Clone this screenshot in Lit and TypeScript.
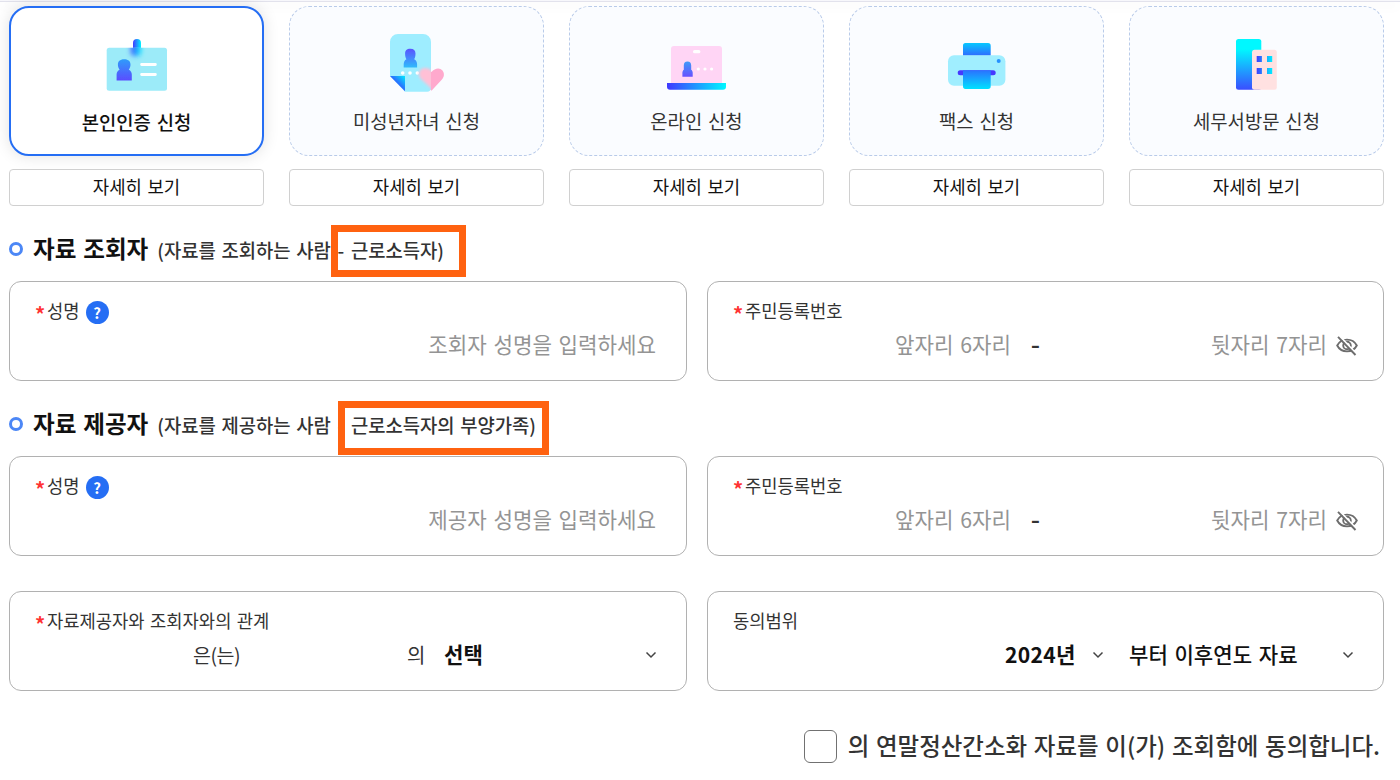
import { LitElement, html, svg, css, nothing, TemplateResult } from 'lit';
import { customElement, property, state } from 'lit/decorators.js';
import { classMap } from 'lit/directives/class-map.js';

interface Method {
  label: string;
  icon: TemplateResult;
}

// All icons share one coordinate space, see the viewBox in AuthCard
const idCardIcon = svg`
  <defs>
    <linearGradient id="clip"><stop stop-color="#4339ff" /><stop offset="1" stop-color="#00f4ff" /></linearGradient>
    <linearGradient id="person" x2="0" y2="1"><stop stop-color="#2f9cfb" /><stop offset="1" stop-color="#5a4cff" /></linearGradient>
    <filter id="soft" x="-50%" y="-50%" width="200%" height="200%"><feGaussianBlur stdDeviation="0.7" /></filter>
    <filter id="glow" x="-100%" y="-100%" width="300%" height="300%"><feGaussianBlur stdDeviation="2.4" /></filter>
    <clipPath id="board"><rect x="106.700" y="47.700" width="60.300" height="43" rx="2.500" /></clipPath>
  </defs>
  <rect x="133" y="39" width="8" height="16" rx="4" fill="url(#clip)" />
  <rect x="106.700" y="47.700" width="60.300" height="43" rx="2.500" fill="#9cebf9" />
  <g clip-path="url(#board)"><rect x="131" y="42" width="10" height="14" rx="4" fill="url(#clip)" filter="url(#glow)" /></g>
  <path d="M124.200 59.200c-4.500 0-6.300 2.400-6.300 5.400 0 2 .6 3.900 1.700 5.200-1.900.9-3 2.600-3 4.600v6.200h15.200v-6.200c0-2-1.100-3.700-3-4.600 1.100-1.300 1.700-3.200 1.700-5.200 0-3-1.800-5.400-6.300-5.400z" fill="url(#person)" filter="url(#soft)" />
  <path d="M141.600 64.500h13.800M141.600 74.500h13.800" stroke="#fff" stroke-width="2.800" stroke-linecap="round" />
`;

const childIcon = svg`
  <defs>
    <linearGradient id="fold" x1="0" y1="1" x2="1" y2="0"><stop offset=".45" stop-color="#315bff" /><stop offset="1" stop-color="#00eaff" /></linearGradient>
    <linearGradient id="person" x2="0" y2="1"><stop stop-color="#5a52ff" /><stop offset="1" stop-color="#2fbcfb" /></linearGradient>
    <filter id="soft" x="-50%" y="-50%" width="200%" height="200%"><feGaussianBlur stdDeviation="0.6" /></filter>
    <filter id="glow" x="-50%" y="-50%" width="200%" height="200%"><feGaussianBlur stdDeviation="1.700" /></filter>
    <clipPath id="sheet"><path d="M118 34h25a8 8 0 0 1 8 8v46a4 4 0 0 1-4 3.700h-22L110 76V42a8 8 0 0 1 8-8z" /></clipPath>
  </defs>
  <path d="M151.500 90.800l-11-11.300c-2.800-3-2.800-7 0-9.500 3-2.500 7.500-2 11 2 3.200-4 8.300-4.800 11-1.500 2.200 3 1.800 6.500-.8 9.300z" fill="#ffa9cd" />
  <path d="M118 34h25a8 8 0 0 1 8 8v46a4 4 0 0 1-4 3.700h-22L110 76V42a8 8 0 0 1 8-8z" fill="#9eedff" />
  <path d="M110 76h15v15.300z" fill="url(#fold)" />
  <path d="M130.300 48.800c-3.600 0-5.200 1.900-5.200 4.800 0 2.500.4 4.300 1.300 5.600-1.700.9-2.700 2.800-2.700 5v3.400h13.400v-3.400c0-2.200-1.100-4.100-2.900-5 .9-1.300 1.300-3.100 1.300-5.600 0-2.900-1.700-4.800-5.200-4.800z" fill="url(#person)" filter="url(#soft)" />
  <g fill="#fff"><circle cx="122.700" cy="73" r="1.800" /><circle cx="130" cy="73" r="1.800" /><circle cx="137.300" cy="73" r="1.800" /></g>
  <g clip-path="url(#sheet)"><path d="M153 90l-12-11c-2.800-3-2.800-7 0-9.500 3-2.500 7.500-2 12 2z" fill="#ffc0d6" filter="url(#glow)" /></g>
`;

const laptopIcon = svg`
  <defs>
    <linearGradient id="base"><stop stop-color="#4038ff" /><stop offset="1" stop-color="#00f8ff" /></linearGradient>
    <linearGradient id="person" x2="0" y2="1"><stop stop-color="#3f9bf8" /><stop offset="1" stop-color="#6650ff" /></linearGradient>
    <filter id="soft" x="-50%" y="-50%" width="200%" height="200%"><feGaussianBlur stdDeviation="0.6" /></filter>
  </defs>
  <path d="M114 46h45a3 3 0 0 1 3 3v34.500h-51V49a3 3 0 0 1 3-3z" fill="#ffd5f5" />
  <rect x="133" y="50" width="7.400" height="3.300" rx="1.600" fill="#fff" />
  <path d="M127.500 61.500c-2.500 0-3.700 1.600-3.700 4v4.200c-.9.700-1.400 1.900-1.400 3.300v3.800h10.300V73c0-1.400-.5-2.600-1.500-3.300v-4.200c0-2.400-1.200-4-3.700-4z" fill="url(#person)" filter="url(#soft)" />
  <g fill="#fff"><circle cx="138.300" cy="69" r="1.600" /><circle cx="145" cy="69" r="1.600" /><circle cx="151.600" cy="69" r="1.600" /></g>
  <path d="M107 83h59v4a3 3 0 0 1-3 2.800h-53a3 3 0 0 1-3-2.800z" fill="url(#base)" />
`;

const faxIcon = svg`
  <defs>
    <linearGradient id="feed" x2="0" y2="1"><stop stop-color="#06c8ff" /><stop offset="1" stop-color="#2f6bff" /></linearGradient>
    <linearGradient id="paper" x2="0" y2="1"><stop stop-color="#2a72ff" /><stop offset="1" stop-color="#00e2ff" /></linearGradient>
  </defs>
  <path d="M126 43h22a2.700 2.700 0 0 1 2.700 2.700v10H123V45.700A2.700 2.700 0 0 1 126 43z" fill="url(#feed)" />
  <rect x="108" y="55.300" width="57.400" height="30.400" rx="6" fill="#a0eeff" />
  <circle cx="158.700" cy="61" r="2" fill="#2691ff" />
  <rect x="117.700" y="70.300" width="38" height="5" rx="2.500" fill="#4638ff" />
  <path d="M123 70.300h27.700v16a2.700 2.700 0 0 1-2.700 2.700h-22a2.700 2.700 0 0 1-3-2.700z" fill="url(#paper)" />
`;

const officeIcon = svg`
  <defs>
    <linearGradient id="tower" x2="0" y2="1"><stop offset=".2" stop-color="#00f8ff" /><stop offset="1" stop-color="#3a4dff" /></linearGradient>
    <linearGradient id="panes" gradientUnits="userSpaceOnUse" x1="136" x2="152"><stop stop-color="#4038ff" /><stop offset="1" stop-color="#00eaff" /></linearGradient>
  </defs>
  <rect x="116" y="39" width="25.300" height="50.800" rx="2.500" fill="url(#tower)" />
  <rect x="132" y="49.700" width="24.800" height="40.100" rx="2.500" fill="#ffe1e1" />
  <path d="M136.700 56h5.200v6h-5.200zM147 56h5.200v6H147zM136.700 68h5.200v6h-5.200zM147 68h5.200v6H147z" fill="url(#panes)" />
`;

const chevron = html`
  <svg class="chevron" width="12" height="8" viewBox="0 0 12 8" aria-hidden="true">
    <path d="M1.500 1.500L6 6l4.500-4.500" fill="none" stroke="#444" stroke-width="1.500" />
  </svg>
`;

const eyeOff = html`
  <svg class="eye" width="22" height="22" viewBox="0 0 22 22" aria-hidden="true">
    <g fill="none" stroke="#6d6d6d" stroke-width="1.900">
      <path d="M1.200 10.500C3.300 6.500 6.800 4.600 11 4.600s7.700 1.900 9.800 5.900c-2.100 4-5.600 5.900-9.800 5.900s-7.700-1.900-9.800-5.900z" />
      <circle cx="11" cy="10.500" r="3.800" />
      <path d="M3.500.8l16.500 17.500" stroke="#fff" />
      <path d="M2 1.800l17.500 18.200" />
    </g>
  </svg>
`;

// One application method: the selectable card and its detail button
@customElement('auth-card')
export class AuthCard extends LitElement {
  @property({ type: String }) public label = '';

  @property({ attribute: false }) public icon: TemplateResult | typeof nothing = nothing;

  @property({ type: Boolean }) public selected = false;

  render() {
    return html`
      <button class=${classMap({ card: true, selected: this.selected })} aria-pressed=${this.selected}>
        <svg width="80" height="62" viewBox="97 34 80 62" aria-hidden="true">${this.icon}</svg>
        <span class="name">${this.label}</span>
      </button>
      <button class="more">자세히 보기</button>
    `;
  }

  static styles = css`
    :host {
      display: flex;
      flex-direction: column;
      gap: 13px;
    }

    button {
      box-sizing: border-box;
      margin: 0;
      padding: 0;
      font-family: inherit;
      word-spacing: 0.09em;
    }

    .card {
      display: flex;
      flex-direction: column;
      align-items: center;
      height: 150px;
      padding-top: 27px;
      border: 1px dashed #b9cbe9;
      border-radius: 20px;
      background: #fafcff;
      color: #333;
      font-size: 18.8px;
      line-height: 28px;
    }

    .name {
      margin-top: 11px;
    }

    .card.selected {
      padding-top: 26px;
      border: 2px solid #256ef4;
      background: #fff;
      color: #111;
      font-weight: 500;
      box-shadow: 0 0 16px rgba(0, 0, 0, 0.12);
    }

    .card.selected .name {
      margin-top: 12px;
      font-size: 18.8px;
    }

    .more {
      height: 37px;
      padding-bottom: 3px;
      border: 1px solid #d0d0d0;
      border-radius: 4px;
      background: #fff;
      color: #111;
      font-size: 17.8px;
      line-height: 32px;
    }
  `;
}

@customElement('app-root')
export class AppRoot extends LitElement {
  @state() private selectedIndex = 0;

  private methods: Method[] = [
    { label: '본인인증 신청', icon: idCardIcon },
    { label: '미성년자녀 신청', icon: childIcon },
    { label: '온라인 신청', icon: laptopIcon },
    { label: '팩스 신청', icon: faxIcon },
    { label: '세무서방문 신청', icon: officeIcon },
  ];

  // Name and resident number, the same pair for both people
  private _person(placeholder: string) {
    return html`
      <div class="row">
        <div class="box">
          <div class="label"><span class="req">*</span>성명<button class="help" aria-label="도움말">?</button></div>
          <div class="fields end name-fields">
            <input class="full" type="text" placeholder=${placeholder} />
          </div>
        </div>
        <div class="box">
          <div class="label"><span class="req">*</span>주민등록번호</div>
          <div class="fields end">
            <input class="front" type="text" placeholder="앞자리 6자리" />
            <span class="dash">-</span>
            <input class="back" type="text" placeholder="뒷자리 7자리" />
            ${eyeOff}
          </div>
        </div>
      </div>
    `;
  }

  render() {
    return html`
      <div class="topline"></div>
      <main>
        <div class="methods">
          ${this.methods.map(
            (method, index) => html`<auth-card
              .label=${method.label}
              .icon=${method.icon}
              .selected=${index === this.selectedIndex}
              @click=${() => {
                this.selectedIndex = index;
              }}
            ></auth-card>`,
          )}
        </div>

        <h2>
          <i class="ring"></i>
          <span>자료 조회자</span>
          <span class="sub">(자료를 조회하는 사람 <span class="hyphen">-</span> <span class="mark viewer">근로소득자)</span></span>
        </h2>
        ${this._person('조회자 성명을 입력하세요')}

        <h2>
          <i class="ring"></i>
          <span>자료 제공자</span>
          <span class="sub">(자료를 제공하는 사람 <span class="hyphen">-</span> <span class="mark provider">근로소득자의 부양가족)</span></span>
        </h2>
        ${this._person('제공자 성명을 입력하세요')}

        <div class="row last">
          <div class="box">
            <div class="label"><span class="req">*</span>자료제공자와 조회자와의 관계</div>
            <div class="fields relation">
              <span class="is">은(는)</span>
              <span class="of">의</span>
              <button class="select grow">선택 ${chevron}</button>
            </div>
          </div>
          <div class="box">
            <div class="label">동의범위</div>
            <div class="fields end">
              <button class="select year"><span>2024년</span> ${chevron}</button>
              <button class="select range">부터 이후연도 자료 ${chevron}</button>
            </div>
          </div>
        </div>

        <label class="agree">
          <input type="checkbox" />
          <span>의 연말정산간소화 자료를 이(가) 조회함에 동의합니다.</span>
        </label>
      </main>
    `;
  }

  static styles = css`
    :host {
      display: block;
      height: 780px;
      overflow: hidden;
      background: #fff;
      color: #333;
      font-family: 'Noto Sans CJK KR', sans-serif;
      word-spacing: 0.09em;
    }

    .topline {
      height: 1px;
      background: #f7f7fb;
      border-bottom: 1px solid #e2e2ec;
      box-shadow: 0 4px 12px rgba(0, 0, 0, 0.07);
    }

    main {
      display: flex;
      flex-direction: column;
      padding: 4px 16px 0 9px;
    }

    .methods {
      display: grid;
      grid-template-columns: repeat(5, 255px);
      justify-content: space-between;
    }

    h2 {
      display: flex;
      align-items: center;
      height: 75px;
      box-sizing: border-box;
      margin: 0;
      padding-top: 9px;
      color: #111;
      font-size: 23.6px;
      font-weight: 700;
      line-height: 34px;
      white-space: nowrap;
    }

    .ring {
      box-sizing: border-box;
      width: 14px;
      height: 14px;
      margin: 2px 10px 0 0;
      border: 3px solid #4c87f6;
      border-radius: 50%;
    }

    .sub {
      margin: 3px 0 0 9px;
      color: #333;
      font-size: 18.8px;
      font-weight: 500;
      line-height: 28px;
    }

    .hyphen {
      margin: 0 1px 0 1px;
    }

    .mark {
      position: relative;
    }

    /* Highlight frame laid over the heading text */
    .mark::after {
      content: '';
      position: absolute;
      box-sizing: border-box;
      border: 7px solid #ff6210;
    }

    .viewer::after {
      left: -20px;
      top: -11px;
      width: 135px;
      height: 52px;
    }

    .provider::after {
      left: -13px;
      top: -10px;
      width: 211px;
      height: 54px;
    }

    .row {
      display: grid;
      grid-template-columns: 678px 677px;
      gap: 20px;
    }

    .row.last {
      margin-top: 35px;
    }

    .box {
      box-sizing: border-box;
      height: 100px;
      padding: 13px 25px 0 25px;
      border: 1px solid #b1b1b1;
      border-radius: 12px;
    }

    .label {
      display: flex;
      align-items: center;
      height: 30px;
      font-size: 17.7px;
      line-height: 26px;
    }

    .req {
      width: 12px;
      height: 14px;
      color: #f33;
      font-size: 20px;
      font-weight: 700;
      line-height: 21px;
    }

    .help {
      width: 23px;
      height: 23px;
      margin: 5px 0 0 6px;
      padding: 0;
      border: 0;
      border-radius: 50%;
      background: #256ef4;
      color: #fff;
      font: 700 15px/22px 'Noto Sans CJK KR', sans-serif;
    }

    .fields {
      display: flex;
      align-items: center;
      height: 38px;
      font-size: 20px;
    }

    .end {
      justify-content: flex-end;
    }

    .name-fields {
      padding-right: 5px;
    }

    input[type='text'] {
      min-width: 0;
      padding: 0;
      border: 0;
      outline: 0;
      background: none;
      font: 400 21.2px/30px 'Noto Sans CJK KR', sans-serif;
      word-spacing: 0.09em;
      text-align: right;
    }

    input::placeholder {
      color: #949494;
    }

    .full {
      width: 400px;
    }

    .front {
      width: 180px;
    }

    .dash {
      width: 49px;
      margin-top: -4px;
      text-align: center;
      font-size: 26px;
      font-weight: 500;
    }

    .back {
      width: 267px;
    }

    .eye {
      margin: 3px 0 0 9px;
    }

    .select {
      display: flex;
      align-items: center;
      justify-content: space-between;
      padding: 0;
      border: 0;
      background: none;
      color: #111;
      font: 700 21.1px/30px 'Noto Sans CJK KR', sans-serif;
      word-spacing: 0.09em;
    }

    .chevron {
      margin-top: 2px;
    }

    .relation {
      padding: 0 4px 0 158px;
    }

    .is {
      width: 214px;
      font-size: 19.5px;
      letter-spacing: -0.5px;
    }

    .of {
      width: 37px;
    }

    .grow {
      flex: 1;
    }

    .year {
      width: 99px;
      margin-right: 25px;
      letter-spacing: 0.3px;
    }

    .range {
      width: 225px;
      margin-right: 4px;
      font-weight: 500;
    }

    .agree {
      display: flex;
      align-items: center;
      justify-content: flex-end;
      gap: 11px;
      margin-top: 39px;
      padding-right: 4px;
      font-size: 23.47px;
      font-weight: 500;
      line-height: 33px;
    }

    .agree span {
      margin-top: -2px;
    }

    .agree input {
      appearance: none;
      box-sizing: border-box;
      width: 33px;
      height: 33px;
      margin: 0;
      border: 1px solid #717171;
      border-radius: 6px;
    }
  `;
}
